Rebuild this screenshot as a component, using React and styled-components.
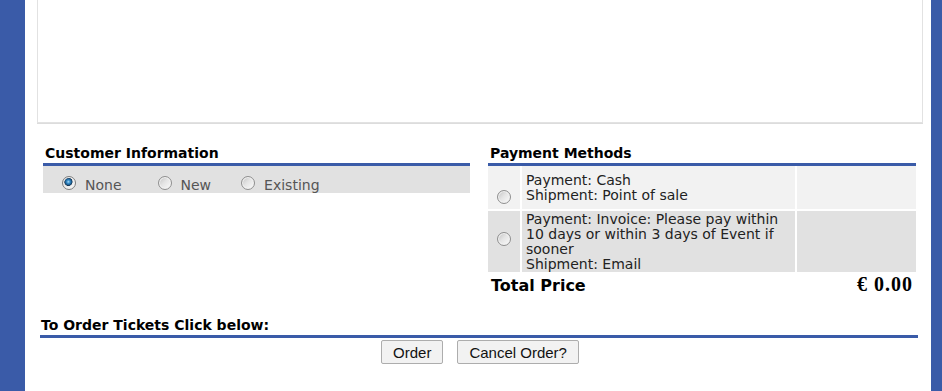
import styled, { createGlobalStyle } from "styled-components";

const blue = "#3a5ba8";

const GlobalStyle = createGlobalStyle`
  html, body {
    margin: 0;
    padding: 0;
    background: #fff;
  }
  body {
    font-family: "DejaVu Sans", Verdana, sans-serif;
    font-size: 14px;
    color: #222;
  }
  *, *::before, *::after {
    box-sizing: border-box;
  }
`;

const Page = styled.div`
  display: flex;
  height: 391px;
  overflow: hidden;
`;

const SideBar = styled.div`
  flex: 0 0 ${(p) => p.width}px;
  background: ${blue};
`;

const Main = styled.div`
  flex: 1;
  background: #fff;
  display: flex;
  flex-direction: column;
`;

const Panel = styled.div`
  height: 123px;
  margin: 0 8px 0 12px;
  border: 1px solid #e2e2e2;
  border-top: none;
  box-shadow: 0 1px 0 #dcdcdc;
  background: #fff;
`;

const Columns = styled.div`
  display: grid;
  grid-template-columns: 427px 428px;
  column-gap: 18px;
  padding: 22px 0 0 18px;
  align-items: start;
`;

const Section = styled.div`
  display: flex;
  flex-direction: column;
`;

const Heading = styled.div`
  font-weight: bold;
  font-size: 14px;
  color: #000;
  line-height: 17px;
  padding: 0 0 1px ${(p) => p.indent || 2}px;
  border-bottom: 3px solid ${blue};
`;

const Radio = styled.input.attrs({ type: "radio" })`
  appearance: none;
  -webkit-appearance: none;
  flex: 0 0 14px;
  width: 14px;
  height: 14px;
  margin: 0;
  border-radius: 50%;
  border: 1px solid #8f8f8f;
  background: linear-gradient(135deg, #c2c2c2 0%, #e4e4e4 45%, #fbfbfb 100%);
  box-shadow: inset 0 0 0 1px #f2f2f2;
  &:checked {
    border-color: #7d7d7d;
    background:
      radial-gradient(circle at 45% 40%, #a8dcf7 0, #3a8fcb 1.6px, #1b5e92 3px, #16334f 3.8px, transparent 4.4px),
      linear-gradient(135deg, #c2c2c2 0%, #e4e4e4 45%, #fbfbfb 100%);
  }
`;

const RadioBand = styled.div`
  display: flex;
  align-items: flex-start;
  height: 27px;
  background: #e1e1e1;
  padding: 10px 0 0 19px;
  color: #555;
`;

const RadioLabel = styled.label`
  display: flex;
  align-items: center;
  height: 14px;
  line-height: 14px;
  margin-right: ${(p) => p.gap}px;
  & > span {
    margin-left: 9px;
    padding-top: 3px;
  }
`;

const MethodTable = styled.div`
  display: grid;
  grid-template-columns: 32px 273px 1fr;
  gap: 2px;
`;

const Cell = styled.div`
  background: ${(p) => (p.alt ? "#e1e1e1" : "#f2f2f2")};
  height: ${(p) => p.h}px;
  line-height: 15px;
  padding: ${(p) => (p.text ? "0 4px 0 4px" : "0")};
  display: flex;
  flex-direction: column;
  justify-content: ${(p) => (p.text ? "center" : "flex-start")};
  align-items: ${(p) => (p.radio ? "center" : "stretch")};
  color: #222;
  & > input {
    margin-top: ${(p) => p.radioTop || 0}px;
  }
`;

const TotalRow = styled.div`
  display: flex;
  justify-content: space-between;
  align-items: baseline;
  height: 24px;
  padding: 1px 4px 0 3px;
`;

const TotalLabel = styled.span`
  font-weight: bold;
  font-size: 16px;
  color: #000;
`;

const TotalValue = styled.span`
  font-family: "Liberation Serif", "Times New Roman", serif;
  font-weight: bold;
  font-size: 20px;
  letter-spacing: 1px;
  margin-right: -1px;
  color: #000;
`;

const OrderSection = styled.div`
  margin: 21px 13px 0 15px;
`;

const Buttons = styled.div`
  display: flex;
  justify-content: center;
  gap: 14px;
  padding: 2px 0 0 2px;
`;

const Button = styled.button`
  font-family: "Liberation Sans", Arial, sans-serif;
  font-size: 15px;
  color: #111;
  height: 24px;
  padding: 0 ${(p) => p.pad}px;
  background: #f2f2f2;
  border: 1px solid #adadad;
  border-radius: 2px;
`;

export default function App() {
  return (
    <>
      <GlobalStyle />
      <Page>
        <SideBar width={25} />
        <Main>
          <Panel />
          <Columns>
            <Section>
              <Heading indent={2}>Customer Information</Heading>
              <RadioBand>
                <RadioLabel gap={36}>
                  <Radio name="cust" defaultChecked />
                  <span>None</span>
                </RadioLabel>
                <RadioLabel gap={30}>
                  <Radio name="cust" />
                  <span>New</span>
                </RadioLabel>
                <RadioLabel gap={0}>
                  <Radio name="cust" />
                  <span>Existing</span>
                </RadioLabel>
              </RadioBand>
            </Section>
            <Section>
              <Heading indent={2}>Payment Methods</Heading>
              <MethodTable>
                <Cell radio h={43} radioTop={24}>
                  <Radio name="pay" />
                </Cell>
                <Cell text h={43}>
                  <div>Payment: Cash</div>
                  <div>Shipment: Point of sale</div>
                </Cell>
                <Cell h={43} />
                <Cell alt radio h={61} radioTop={21}>
                  <Radio name="pay" />
                </Cell>
                <Cell alt text h={61}>
                  <div>
                    Payment: Invoice: Please pay within 10 days or within 3
                    days of Event if sooner
                  </div>
                  <div>Shipment: Email</div>
                </Cell>
                <Cell alt h={61} />
              </MethodTable>
              <TotalRow>
                <TotalLabel>Total Price</TotalLabel>
                <TotalValue>€ 0.00</TotalValue>
              </TotalRow>
            </Section>
          </Columns>
          <OrderSection>
            <Heading indent={1}>To Order Tickets Click below:</Heading>
            <Buttons>
              <Button pad={11}>Order</Button>
              <Button pad={11}>Cancel Order?</Button>
            </Buttons>
          </OrderSection>
        </Main>
        <SideBar width={11} />
      </Page>
    </>
  );
}
